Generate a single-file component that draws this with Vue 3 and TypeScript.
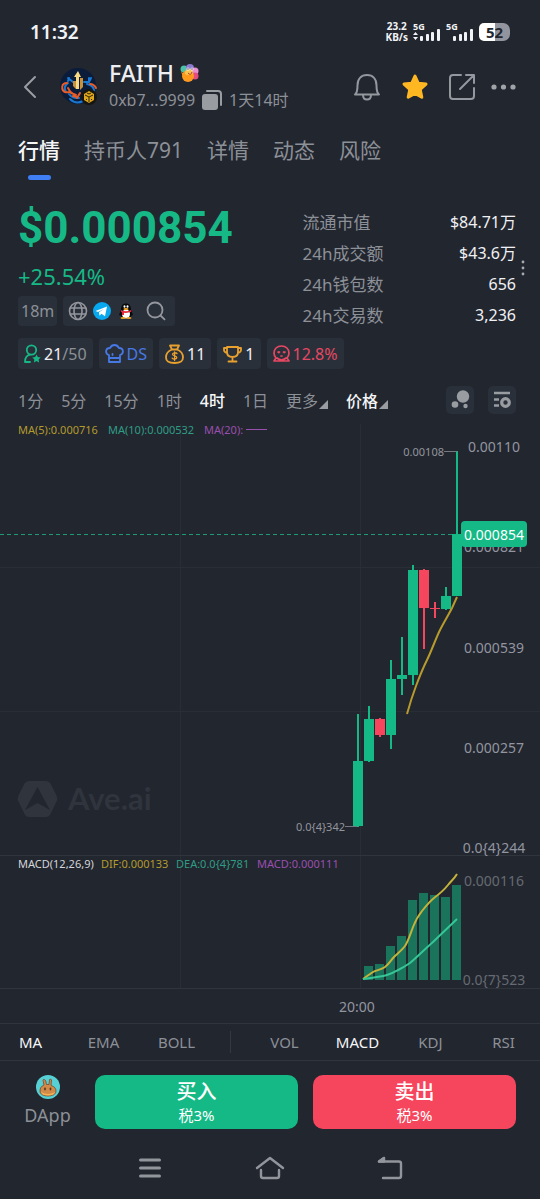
<script setup lang="ts">
import { ref } from 'vue'

interface Candle {
  x: number
  top: number
  bottom: number
  high: number
  low: number
  up: boolean
}

const tabs = ['行情', '持币人791', '详情', '动态', '风险']
const activeTab = ref('行情')

const stats = [
  { label: '流通市值', value: '$84.71万' },
  { label: '24h成交额', value: '$43.6万' },
  { label: '24h钱包数', value: '656' },
  { label: '24h交易数', value: '3,236' },
]

const ranges = ['1分', '5分', '15分', '1时', '4时', '1日']
const activeRange = ref('4时')

const overlays = ['MA', 'EMA', 'BOLL']
const oscillators = ['VOL', 'MACD', 'KDJ', 'RSI']
const enabled = ref(['MA', 'MACD'])

const candles: Candle[] = [
  { x: 353, top: 761, bottom: 826, high: 714, low: 827, up: true },
  { x: 364, top: 719, bottom: 761, high: 706, low: 762, up: true },
  { x: 375, top: 719, bottom: 735, high: 718, low: 737, up: false },
  { x: 386, top: 679, bottom: 735, high: 660, low: 749, up: true },
  { x: 397, top: 675, bottom: 679, high: 637, low: 695, up: true },
  { x: 408, top: 570, bottom: 675, high: 565, low: 685, up: true },
  { x: 419, top: 570, bottom: 608, high: 569, low: 649, up: false },
  { x: 430, top: 608, bottom: 609, high: 602, low: 618, up: false },
  { x: 441, top: 596, bottom: 609, high: 587, low: 610, up: true },
  { x: 452, top: 534, bottom: 596, high: 451, low: 596, up: true },
]

const histogram = [966, 964, 946, 936, 900, 893, 895, 897, 885]

const priceAxis = [
  { y: 452, text: '0.00110' },
  { y: 552, text: '0.000821' },
  { y: 653, text: '0.000539' },
  { y: 753, text: '0.000257' },
  { y: 853, text: '0.0{4}244' },
]

function toggle(name: string) {
  enabled.value = enabled.value.includes(name)
    ? enabled.value.filter((n) => n !== name)
    : [...enabled.value, name]
}
</script>

<template>
  <div class="app">
    <div class="status">
      <span class="clock">11:32</span>
      <div class="signals">
        <span class="speed">23.2<br />KB/s</span>
        <span class="net">
          <span class="gen">5G</span>
          <svg width="28" height="14" viewBox="0 0 28 14" fill="#f1f3f6">
            <path d="M0 7l2.5-3L5 7zM0 9h5l-2.5 3z" />
            <rect x="7" y="8" width="3" height="5" rx="1" />
            <rect x="13" y="6" width="3" height="7" rx="1" />
            <rect x="18" y="4" width="3" height="9" rx="1" />
            <rect x="24" y="1" width="3" height="12" rx="1" />
          </svg>
        </span>
        <span class="net">
          <span class="gen">5G</span>
          <svg width="28" height="14" viewBox="0 0 28 14" fill="#f1f3f6">
            <rect x="7" y="8" width="3" height="5" rx="1" />
            <rect x="13" y="6" width="3" height="7" rx="1" />
            <rect x="18" y="4" width="3" height="9" rx="1" />
            <rect x="24" y="1" width="3" height="12" rx="1" />
          </svg>
        </span>
        <span class="battery">52</span>
      </div>
    </div>

    <header class="header">
      <button class="icon-btn back" aria-label="返回">
        <svg width="14" height="24" viewBox="0 0 14 24" fill="none" stroke="#9a9da3" stroke-width="2" stroke-linecap="round" stroke-linejoin="round"><path d="M12 2L2 12l10 10" /></svg>
      </button>
      <svg class="avatar" width="38" height="38" viewBox="0 0 38 38" fill="none">
        <circle cx="18" cy="18" r="18" fill="#0b1c3b" />
        <g stroke="#1878d2" stroke-width="2" stroke-linecap="round">
          <path d="M8 10l5 4h4M8 15c-4 3-4 6-2 9M24 14h5l2-4M27 16c5 1 8 4 7 9M9 26c3 4 6 4 10 4M10 31c4 4 9 4 13 2M9 10l-1 3M29 10v3" />
        </g>
        <g stroke="#e85c27" stroke-width="2" stroke-linecap="round">
          <path d="M7 15c-6 0-6 7-2 9 3 1 5-1 7 1M8 20l3 5 5 2M13 28l4 1M30 16c4 0 5 2 6 4M20 25l-3 5" />
        </g>
        <path d="M18 3l3 6h-2v12h-3V9h-2z" fill="#f7d983" />
        <path d="M13 13h3v8l-3-3zM20 10h3v9l-3 3z" fill="#c8923c" />
        <circle cx="29" cy="29" r="8" fill="#17150f" />
        <path d="M29 23l5 3v6l-5 3-5-3v-6z" fill="#dda61c" />
        <path d="M25 27l4 2 4-2M29 29v5M26 31l1 1M32 31l-1 1M27 25l2 1 2-1" stroke="#2b220d" stroke-width="1" />
      </svg>
      <div class="token">
        <div class="name">
          <h1>FAITH</h1>
          <svg width="19" height="18" viewBox="0 0 19 18">
            <circle cx="4" cy="5" r="3.5" fill="#4bc2a9" />
            <circle cx="10" cy="4" r="4" fill="#8a79cf" />
            <circle cx="15" cy="7" r="3.5" fill="#ea8ed1" />
            <circle cx="15" cy="12" r="3.5" fill="#e54c82" />
            <circle cx="8" cy="12" r="6" fill="#ff9924" />
            <circle cx="9" cy="9" r="4" fill="#f6c254" />
            <path d="M1 8l6 3 6-1-2 6H5z" fill="#fb9a1b" />
            <circle cx="8" cy="5" r="1.5" fill="#fff" />
            <circle cx="12" cy="5" r="1.5" fill="#fff" />
            <circle cx="8" cy="5" r=".7" fill="#222" />
            <circle cx="12" cy="5" r=".7" fill="#222" />
            <path d="M8 9q3 3 4-1" stroke="#b03e22" fill="none" />
          </svg>
        </div>
        <div class="address">
          <span>0xb7...9999</span>
          <button class="icon-btn" aria-label="复制地址">
            <svg width="20" height="20" viewBox="0 0 20 20"><rect x="0" y="4" width="16" height="16" rx="3" fill="#999ca1" /><path d="M5 1h11q3 0 3 3v11" fill="none" stroke="#999ca1" stroke-width="2" stroke-linecap="round" /></svg>
          </button>
          <span>1天14时</span>
        </div>
      </div>
      <div class="actions">
        <button class="icon-btn" aria-label="提醒">
          <svg width="28" height="28" viewBox="0 0 28 28" fill="none" stroke="#94979e" stroke-width="2" stroke-linejoin="round" stroke-linecap="round"><path d="M2 21.500c2-1.500 2.500-4 2.500-9C4.500 6 8 2 14 2s9.500 4 9.500 10.500c0 5 .5 7.500 2.500 9zM10 22c0 2.500 1.500 4.500 4 4.500s4-2 4-4.500" /></svg>
        </button>
        <button class="icon-btn" aria-label="取消收藏">
          <svg width="28" height="28" viewBox="0 0 28 28"><path d="M14 3l3.200 7.200 7.800.9-5.800 5.300 1.600 7.900L14 20.400l-6.800 3.900 1.600-7.900L3 11.100l7.800-.9z" fill="#ffb722" stroke="#ffb722" stroke-width="3" stroke-linejoin="round" /></svg>
        </button>
        <button class="icon-btn" aria-label="分享">
          <svg width="26" height="26" viewBox="0 0 26 26" fill="none" stroke="#94979e" stroke-width="2" stroke-linecap="round" stroke-linejoin="round"><path d="M12 1H4Q1 1 1 4v18q0 3 3 3h18q3 0 3-3v-8M17 1h8v8M24 2L11 15" /></svg>
        </button>
        <button class="icon-btn more" aria-label="更多">
          <svg width="26" height="6" viewBox="0 0 26 6" fill="#a0a3a8"><circle cx="3" cy="3" r="2.600" /><circle cx="12.500" cy="3" r="2.600" /><circle cx="22" cy="3" r="2.600" /></svg>
        </button>
      </div>
    </header>

    <nav class="tabs">
      <button v-for="t in tabs" :key="t" :class="{ active: t === activeTab }" @click="activeTab = t">{{ t }}</button>
    </nav>

    <section class="overview">
      <div>
        <div class="price">$0.000854</div>
        <div class="change">+25.54%</div>
        <div class="chips">
          <span class="chip">18m</span>
          <div class="chip links">
            <a href="#web" aria-label="官网">
              <svg width="20" height="20" viewBox="0 0 20 20" fill="none" stroke="#94979e" stroke-width="1.600"><circle cx="10" cy="10" r="8.500" /><ellipse cx="10" cy="10" rx="4" ry="8.500" /><path d="M2 7h16M2 13h16" /></svg>
            </a>
            <a href="#telegram" aria-label="Telegram">
              <svg width="20" height="20" viewBox="0 0 20 20"><circle cx="10" cy="10" r="9" fill="#08a8ef" /><path d="M3.500 10L15 5.500l-2 9.800-3.500-2.600-2 2-.5-3.500L12 8l-6 3z" fill="#fff" /></svg>
            </a>
            <a href="#qq" aria-label="QQ">
              <svg width="20" height="20" viewBox="0 0 20 20"><path d="M5 9C5 4.500 7 2.500 10 2.500S15 4.500 15 9l2 5-1.500.5L14 17H6l-1.500-2.500L3 14z" fill="#08090b" /><ellipse cx="10" cy="13" rx="4" ry="4.500" fill="#fff" /><path d="M5 9q5 2.500 10 0l.3 1.800Q10 13 5 11z" fill="#e7293a" /><path d="M6 11h2v3H6z" fill="#e7293a" /><ellipse cx="8.500" cy="5.500" rx="1" ry="1.300" fill="#fff" /><ellipse cx="11.500" cy="5.500" rx="1" ry="1.300" fill="#fff" /><ellipse cx="10" cy="8" rx="2.600" ry=".9" fill="#f4a51d" /><ellipse cx="7" cy="17" rx="2.500" ry="1" fill="#f4a51d" /><ellipse cx="13" cy="17" rx="2.500" ry="1" fill="#f4a51d" /></svg>
            </a>
            <a class="find" href="#search" aria-label="搜索">
              <svg width="20" height="20" viewBox="0 0 20 20" fill="none" stroke="#94979e" stroke-width="1.800" stroke-linecap="round"><circle cx="9" cy="9" r="7.500" /><path d="M14.500 14.500l4 3.800" /></svg>
            </a>
          </div>
        </div>
      </div>
      <dl class="stats">
        <div v-for="s in stats" :key="s.label">
          <dt>{{ s.label }}</dt>
          <dd>{{ s.value }}</dd>
        </div>
        <button class="icon-btn expand" aria-label="展开">
          <svg width="4" height="16" viewBox="0 0 4 16" fill="#a7aab0"><circle cx="2" cy="2" r="1.400" /><circle cx="2" cy="8" r="1.400" /><circle cx="2" cy="14" r="1.400" /></svg>
        </button>
      </dl>
    </section>

    <section class="badges">
      <button class="badge">
        <svg width="17" height="19" viewBox="0 0 17 19" fill="none"><circle cx="7.500" cy="6" r="4.700" stroke="#16b886" stroke-width="1.800" /><path d="M1 18c0-4 1.500-6.500 5-7.300M1 18h5" stroke="#16b886" stroke-width="1.800" stroke-linecap="round" /><path d="M12.500 10.500l1.300 2.600 2.900.4-2.100 2 .5 2.900-2.600-1.400-2.600 1.400.5-2.900-2.100-2 2.900-.4z" fill="#16b886" /></svg>
        <span>21<i>/50</i></span>
      </button>
      <button class="badge blue">
        <svg width="19" height="19" viewBox="0 0 19 19" fill="none" stroke="#4779e6" stroke-width="1.800" stroke-linejoin="round" stroke-linecap="round"><path d="M4 14V11C0 10 0 4 5 4 7 0 12 0 14 4c5 0 5 6 1 7v3zM4 14v4h11v-4M7.500 11v-1" /></svg>
        <span>DS</span>
      </button>
      <button class="badge">
        <svg width="19" height="20" viewBox="0 0 19 20" fill="none" stroke="#e8a02e" stroke-width="1.800" stroke-linejoin="round" stroke-linecap="round"><path d="M5 1.500h9l-2 4H7zM7 5.500C3 7 1 10 1 13.500c0 4 3 5.500 8.500 5.500s8.500-1.500 8.500-5.500C18 10 16 7 12 5.500" /><path d="M12 9.500c-1-1.200-4.500-1-4.500.8 0 2 4.300 1.200 4.300 3.200 0 1.800-3.500 2-4.600.6M9.600 8v8.500" stroke-width="1.300" /></svg>
        <span>11</span>
      </button>
      <button class="badge">
        <svg width="19" height="18" viewBox="0 0 19 18" fill="none" stroke="#e8a02e" stroke-width="1.800" stroke-linejoin="round" stroke-linecap="round"><path d="M4 2h11v5c0 3-2 5-5.500 5S4 10 4 7zM3.500 3H1v2q0 2 3 3M15.500 3H18v2q0 2-3 3M9.500 12v4M5.500 16.500h8" /></svg>
        <span>1</span>
      </button>
      <button class="badge red">
        <svg width="17" height="18" viewBox="0 0 17 18" fill="none" stroke="#e64863" stroke-width="1.700" stroke-linejoin="round" stroke-linecap="round"><path d="M3 13C1 11 1 9 1 8c0-4 3-7 7.500-7S16 4 16 8c0 1 0 3-2 5l2 3H1zM4 13q4.500 4 9 0" /><circle cx="5.800" cy="7.500" r="1" fill="#e64863" stroke="none" /><circle cx="11.200" cy="7.500" r="1" fill="#e64863" stroke="none" /><path d="M5 7h1.500M10.500 7H12M8 11h1" /></svg>
        <span>12.8%</span>
      </button>
    </section>

    <div class="ranges">
      <button v-for="r in ranges" :key="r" :class="{ active: r === activeRange }" @click="activeRange = r">{{ r }}</button>
      <button class="drop">更多</button>
      <button class="drop active">价格</button>
      <div class="tools">
        <button class="tool" aria-label="气泡图">
          <svg width="28" height="28" viewBox="0 0 28 28" fill="#999ca1"><circle cx="17" cy="10.500" r="6.200" /><circle cx="9" cy="18.500" r="3.300" /><circle cx="19.500" cy="20" r="2.200" /></svg>
        </button>
        <button class="tool" aria-label="图表设置">
          <svg width="28" height="28" viewBox="0 0 28 28" fill="none" stroke="#999ca1" stroke-width="2.400"><path d="M6 7h16M6 13.500h5M6 19.500h5" /><circle cx="17.500" cy="16.500" r="3.800" stroke-width="3.200" /></svg>
        </button>
      </div>
    </div>

    <svg class="chart" viewBox="0 414 540 609" role="img" aria-label="K线图">
      <g stroke="#292d36">
        <path d="M180.500 424V988M360.500 424V988M0 567.500H540M0 711.500H540" />
        <path d="M0 855.500H540M0 988.500H540" stroke="#30343d" />
      </g>

      <g class="legend">
        <text x="18" y="434" fill="#b39b2d">MA(5):0.000716</text>
        <text x="108" y="434" fill="#2f9d85">MA(10):0.000532</text>
        <text x="204" y="434" fill="#9a4fae">MA(20):</text>
        <path d="M246 429.500H267" stroke="#9a4fae" />
        <text x="18" y="868" fill="#d3d5d9">MACD(12,26,9)</text>
        <text x="101" y="868" fill="#b39b2d">DIF:0.000133</text>
        <text x="176" y="868" fill="#2f9d85">DEA:0.0{4}781</text>
        <text x="257" y="868" fill="#9a4fae">MACD:0.000111</text>
      </g>

      <g fill="#2f343d">
        <path fill-rule="evenodd" d="M29 781h17q3 0 4.500 2.500l6 12q1.500 3 0 6l-6 12.500q-1.500 3-4.500 3H29q-3 0-4.500-3l-6-12.500q-1.500-3 0-6l6-12Q26 781 29 781zM37.500 787L25 810l12.500-7L50 810z" />
        <text class="mark" x="68" y="810">Ave.ai</text>
      </g>

      <g class="axis">
        <text v-for="p in priceAxis" :key="p.text" x="494" :y="p.y">{{ p.text }}</text>
        <text x="357" y="1012">20:00</text>
        <text class="dim" x="494" y="886">0.000116</text>
        <text class="dim" x="494" y="985">0.0{7}523</text>
      </g>

      <path d="M0 534.500H452" stroke="#219876" stroke-dasharray="4 3" />
      <g v-for="c in candles" :key="c.x" :fill="c.up ? '#14b986' : '#f6465d'">
        <rect :x="c.x + 4" :y="c.high" width="2" :height="c.low - c.high" />
        <rect :x="c.x" :y="c.top" width="10" :height="c.bottom - c.top" />
      </g>
      <path class="line" d="M407 714C410 703 413 694 416 686S423 668 427 660S436 638 440 630S449 614 452 608L457 597" stroke="#b89b2d" />

      <g class="extreme">
        <path d="M444 451.500H457M345 826.500H357" stroke="#747880" />
        <text x="444" y="456">0.00108</text>
        <text x="345" y="831">0.0{4}342</text>
      </g>

      <rect x="461" y="521" width="66" height="26" rx="4" fill="#14b986" />
      <text class="tag" x="494" y="540">0.000854</text>

      <rect v-for="(top, i) in histogram" :key="i" :x="364 + i * 11" :y="top" width="9" :height="980 - top" fill="#1a735b" />
      <path class="line" d="M363 979C367 976 370 974 373 972S381 970 385 967S391 960 394 957S402 950 405 946S411 932 413 927S418 916 422 911S430 901 434 898S444 890 448 885S454 879 457 874" stroke="#c3b33b" />
      <path class="line" d="M363 979C371 978 380 977 387 975S396 971 400 969S407 965 410 963S425 949 433 942L457 919" stroke="#35c795" />
    </svg>

    <div class="indicators">
      <div class="group three">
        <button v-for="n in overlays" :key="n" :class="{ active: enabled.includes(n) }" @click="toggle(n)">{{ n }}</button>
      </div>
      <span class="split"></span>
      <div class="group four">
        <button v-for="n in oscillators" :key="n" :class="{ active: enabled.includes(n) }" @click="toggle(n)">{{ n }}</button>
      </div>
    </div>

    <div class="trade">
      <a class="dapp" href="#dapp">
        <svg width="24" height="24" viewBox="0 0 24 24"><circle cx="12" cy="12" r="12" fill="#56d0d4" /><path d="M8 10L7 5.500Q7 4 8.500 4.500T10.500 9.500h2.500l.5-5Q15 3.500 15.500 5L15 10.500c3.500 1 5 3 5 5.500 0 3.500-3.500 5-8 5s-8-1.500-8-5c0-3 1.500-5 4-6z" fill="#d28a49" stroke="#6c4b35" stroke-width=".8" /><path d="M5 17q7 4 14 0-1 3.500-7 3.500T5 17z" fill="#f4b456" /><ellipse cx="9" cy="14" rx=".9" ry="1.400" fill="#57341e" /><ellipse cx="14.500" cy="14" rx=".9" ry="1.400" fill="#57341e" /></svg>
        <span>DApp</span>
      </a>
      <button class="buy"><b>买入</b><small>税3%</small></button>
      <button class="sell"><b>卖出</b><small>税3%</small></button>
    </div>

    <div class="sysnav">
      <button class="icon-btn" aria-label="最近任务">
        <svg width="30" height="24" viewBox="0 0 30 24" fill="none" stroke="#92959c" stroke-width="3" stroke-linecap="round"><path d="M5.500 4h19M5.500 12h19M5.500 20h19" /></svg>
      </button>
      <button class="icon-btn" aria-label="主屏幕">
        <svg width="30" height="24" viewBox="0 0 30 24" fill="none" stroke="#92959c" stroke-width="2.400" stroke-linecap="round" stroke-linejoin="round"><path d="M2 12L15 2l13 10M6 14v6q0 2 2 2h14q2 0 2-2v-6" /></svg>
      </button>
      <button class="icon-btn" aria-label="返回上一页">
        <svg width="30" height="24" viewBox="0 0 30 24" fill="none" stroke="#92959c" stroke-width="2.400" stroke-linecap="round" stroke-linejoin="round"><path d="M9 2L4 5.500h20q2 0 2 2V20q0 2-2 2H8" /><path d="M9 2L4 5.500h5z" fill="#92959c" /></svg>
      </button>
    </div>
  </div>
</template>

<style>
body {
  margin: 0;
  background: #22262f;
}
</style>

<style scoped>
.app {
  min-height: 100vh;
  box-sizing: border-box;
  background: #22262f;
  color: #8c9097;
  font-family: "Noto Sans", "Noto Sans CJK SC", sans-serif;
  font-size: 16px;
}
button {
  margin: 0;
  padding: 0;
  border: 0;
  background: none;
  color: inherit;
  font: inherit;
  cursor: pointer;
  white-space: nowrap;
}
a {
  color: inherit;
  text-decoration: none;
}
svg {
  display: block;
  flex: none;
}
.icon-btn {
  display: flex;
  align-items: center;
  justify-content: center;
}
.status {
  display: flex;
  align-items: center;
  justify-content: space-between;
  height: 64px;
  padding: 0 30px;
  color: #f1f3f6;
}
.clock {
  font-size: 19px;
  font-weight: 600;
}
.signals {
  display: flex;
  align-items: center;
  gap: 5px;
}
.speed {
  font-size: 10px;
  line-height: 11px;
  font-weight: 700;
  text-align: center;
}
.net {
  display: grid;
}
.net > * {
  grid-area: 1 / 1;
}
.net svg {
  margin-top: 6px;
}
.gen {
  font-size: 9px;
  line-height: 9px;
  font-weight: 700;
}
.battery {
  width: 31px;
  height: 18px;
  border-radius: 5px 7px 7px 5px;
  background: linear-gradient(90deg, #fff 52%, #92959d 52%);
  color: #22262f;
  font-size: 15px;
  line-height: 18px;
  font-weight: 700;
  text-align: center;
}
.header {
  display: flex;
  align-items: center;
  height: 46px;
  padding: 0 23px;
}
.avatar {
  margin: 0 11px 0 23px;
}
.token {
  flex: 1;
}
.name,
.address {
  display: flex;
  align-items: center;
  gap: 6px;
  white-space: nowrap;
}
h1 {
  margin: 0;
  color: #eceef1;
  font-size: 23px;
  line-height: 26px;
  font-weight: 500;
}
.address {
  gap: 7px;
  line-height: 28px;
}
.actions {
  display: flex;
  align-items: center;
  gap: 20px;
}
.more {
  margin-left: -4px;
}
.tabs {
  display: flex;
  gap: 24px;
  margin-top: 25px;
  padding: 0 18px;
  font-size: 21px;
  line-height: 30px;
}
.tabs button {
  display: grid;
  justify-items: center;
  gap: 10px;
}
.tabs button::after {
  content: "";
  width: 23px;
  height: 5px;
  border-radius: 3px;
}
.tabs .active {
  color: #f5f6f8;
  font-weight: 500;
}
.tabs .active::after {
  background: #3f7ef5;
}
.overview {
  display: grid;
  grid-template-columns: 4fr 3fr;
  margin-top: 24px;
  padding: 0 24px 0 18px;
}
.price {
  color: #16b886;
  font-family: Roboto, "Noto Sans", sans-serif;
  font-size: 44px;
  line-height: 48px;
  font-weight: 700;
}
.change {
  margin: 10px 0 6px;
  color: #16b886;
  font-size: 22px;
  line-height: 28px;
}
.chips,
.badges {
  display: flex;
  gap: 6px;
}
.chip {
  display: flex;
  align-items: center;
  height: 30px;
  padding: 0 3px;
  border-radius: 4px;
  background: #2a303a;
}
.links {
  gap: 4px;
  padding: 0 9px 0 5px;
}
.find {
  margin-left: 6px;
}
.stats {
  position: relative;
  margin: 3px 0 0;
}
.stats > div {
  display: flex;
  justify-content: space-between;
  line-height: 31px;
}
.stats dt {
  font-size: 17px;
}
.stats dd {
  margin: 0;
  color: #f0f1f4;
}
.expand {
  position: absolute;
  top: 53px;
  right: -9px;
}
.badges {
  margin-top: 7px;
  padding: 0 18px;
}
.badge {
  display: flex;
  align-items: center;
  gap: 3px;
  height: 31px;
  padding: 0 6px;
  border-radius: 4px;
  background: #2a303a;
  color: #f0f1f4;
}
.badge i {
  color: #8c9097;
  font-style: normal;
}
.badge.blue {
  color: #4779e6;
}
.badge.red {
  color: #e64863;
}
.ranges {
  display: flex;
  align-items: center;
  gap: 18px;
  height: 28px;
  margin-top: 17px;
  padding: 0 24px 0 18px;
}
.ranges .active {
  color: #f5f6f8;
  font-weight: 500;
}
.drop {
  display: flex;
  align-items: flex-end;
  gap: 1px;
}
.drop::after {
  content: "";
  margin-bottom: 3px;
  border-bottom: 9px solid #999ca1;
  border-left: 9px solid transparent;
}
.tools {
  display: flex;
  gap: 14px;
  margin-left: auto;
}
.tool {
  border-radius: 5px;
  background: #2a303a;
}
.chart {
  width: 100%;
}
.legend {
  font-size: 11px;
}
.axis {
  fill: #9295a0;
  font-size: 14px;
  text-anchor: middle;
}
.dim {
  fill: #666a72;
}
.mark {
  font-family: Lato, "Noto Sans", sans-serif;
  font-size: 31px;
  font-weight: 700;
}
.line {
  fill: none;
  stroke-width: 2;
}
.extreme {
  fill: #92959c;
  font-size: 11px;
  text-anchor: end;
}
.tag {
  fill: #fff;
  font-size: 14px;
  text-anchor: middle;
}
.indicators {
  display: flex;
  align-items: center;
  height: 36px;
  border-top: 1px solid #30343d;
  border-bottom: 1px solid #30343d;
  font-size: 15px;
}
.group {
  display: grid;
}
.three {
  flex: 219;
  grid-template-columns: repeat(3, 1fr);
  margin-left: -6px;
}
.four {
  flex: 292;
  grid-template-columns: repeat(4, 1fr);
}
.split {
  width: 1px;
  height: 22px;
  margin: 0 17px;
  background: #343841;
}
.indicators .active {
  color: #f5f6f8;
}
.trade {
  display: grid;
  grid-template-columns: 62px 1fr 1fr;
  gap: 15px;
  padding: 14px 24px 0 18px;
}
.dapp {
  display: grid;
  justify-items: center;
  align-content: space-between;
  padding-right: 3px;
  font-size: 18px;
  line-height: 28px;
}
.buy,
.sell {
  display: grid;
  align-content: center;
  height: 54px;
  border-radius: 10px;
  background: #14b986;
  color: #fff;
}
.sell {
  background: #f6465d;
}
.trade b {
  font-size: 20px;
  line-height: 26px;
  font-weight: 500;
}
.trade small {
  font-size: 15px;
  line-height: 20px;
}
.sysnav {
  display: flex;
  justify-content: center;
  gap: 90px;
  padding: 27px 0 19px;
}
</style>
